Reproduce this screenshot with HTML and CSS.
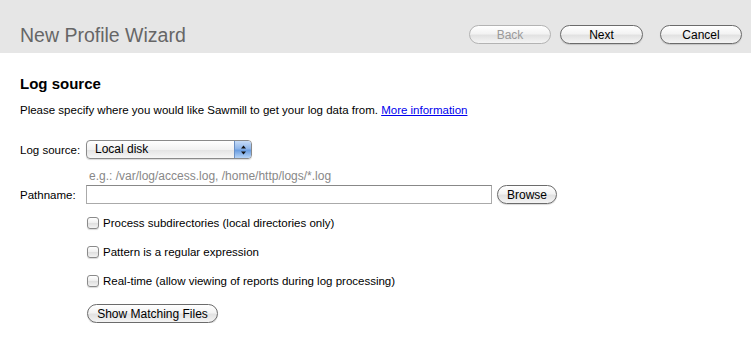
FILE: index.html
```html
<!DOCTYPE html>
<html lang="en">

<head>
    <meta charset="UTF-8">
    <title>New Profile Wizard</title>
    <link rel="stylesheet" href="styles.css">
</head>

<body>
    <div class="header">
        <h1 class="title">New Profile Wizard</h1>
        <div class="nav">
            <button class="aqua wide" disabled>Back</button>
            <button class="aqua wide next">Next</button>
            <button class="aqua wide">Cancel</button>
        </div>
    </div>

    <div class="content">
        <h2>Log source</h2>
        <p class="description">Please specify where you would like Sawmill to get your log data from. <a href="#">More information</a></p>

        <div class="row source-row">
            <label class="label">Log source:</label>
            <div class="select">
                <span class="select-value">Local disk</span>
                <span class="select-arrow">
                    <svg width="7" height="10" viewBox="0 0 7 10">
                        <path d="M3.5 0.5 L6 3.5 L1 3.5 Z" fill="#111"/>
                        <path d="M3.5 9.5 L6 6.5 L1 6.5 Z" fill="#111"/>
                    </svg>
                </span>
            </div>
        </div>

        <div class="hint">e.g.: /var/log/access.log, /home/http/logs/*.log</div>

        <div class="row path-row">
            <label class="label" for="pathname">Pathname:</label>
            <input type="text" id="pathname" class="text-input">
            <button class="aqua small browse">Browse</button>
        </div>

        <div class="options">
            <label class="check"><input type="checkbox"> Process subdirectories (local directories only)</label>
            <label class="check"><input type="checkbox"> Pattern is a regular expression</label>
            <label class="check"><input type="checkbox"> Real-time (allow viewing of reports during log processing)</label>
        </div>

        <button class="aqua small match">Show Matching Files</button>
    </div>
</body>

</html>
```

FILE: styles.css
```css
* {
    margin: 0;
    padding: 0;
    box-sizing: border-box;
}

body {
    font-family: 'Liberation Sans', Arial, sans-serif;
    font-size: 11.5px;
    color: #000;
    background: #fff;
}

.header {
    height: 53px;
    background: #e6e6e6;
    display: flex;
    justify-content: space-between;
    align-items: flex-end;
    padding: 0 9px 9px 20px;
}

.title {
    font-size: 19.5px;
    font-weight: normal;
    color: #666;
    line-height: 20px;
    margin-bottom: -1px;
}

.nav {
    display: flex;
    gap: 9px;
}

.aqua {
    font-family: 'Liberation Sans', Arial, sans-serif;
    font-size: 12px;
    color: #000;
    height: 19px;
    border: 1px solid #6b6b6b;
    border-radius: 10px;
    background: linear-gradient(to bottom, #ffffff 0%, #f3f3f3 45%, #e2e2e2 55%, #f4f4f4 100%);
    box-shadow: 0 1px 1px rgba(0, 0, 0, 0.15);
    cursor: pointer;
}

.aqua:disabled {
    color: #9a9a9a;
    border-color: #b3b3b3;
    cursor: default;
    box-shadow: none;
}

.wide {
    width: 82px;
}

.next {
    width: 83px;
    margin-right: 8px;
}

.small {
    padding: 0 8px;
}

.browse {
    width: 60px;
}

.content {
    padding: 22px 20px 0 20px;
}

h2 {
    font-size: 15px;
    font-weight: bold;
    line-height: 18px;
}

.description {
    margin-top: 10px;
    line-height: 14px;
}

.description a {
    color: #0000ee;
}

.row {
    display: flex;
    align-items: center;
}

.label {
    width: 66px;
}

.source-row {
    margin-top: 23px;
}

.select {
    width: 166px;
    height: 19px;
    display: flex;
    border: 1px solid #8a8a8a;
    border-radius: 4px;
    overflow: hidden;
    background: linear-gradient(to bottom, #ffffff 0%, #f2f2f2 50%, #e4e4e4 55%, #f6f6f6 100%);
    box-shadow: 0 1px 1px rgba(0, 0, 0, 0.15);
}

.select-value {
    flex: 1;
    padding-left: 8px;
    font-size: 12px;
    line-height: 17px;
}

.select-arrow {
    width: 17px;
    display: flex;
    align-items: center;
    justify-content: center;
    border-left: 1px solid #6a8fc4;
    background: linear-gradient(to bottom, #c7dcf7 0%, #8fb6ea 45%, #6a9de0 55%, #b6d4f7 100%);
}

.hint {
    color: #888;
    font-size: 12px;
    margin: 10px 0 0 69px;
    line-height: 14px;
}

.path-row {
    margin-top: 2px;
}

.text-input {
    width: 406px;
    height: 19px;
    border: 1px solid #aaa;
    border-top-color: #888;
    margin-right: 5px;
    font-size: 11px;
}

.options {
    display: flex;
    flex-direction: column;
    gap: 15px;
    margin: 12px 0 0 67px;
}

.check {
    display: flex;
    align-items: center;
    gap: 4px;
    line-height: 14px;
}

.check input {
    appearance: none;
    width: 12px;
    height: 12px;
    border: 1px solid #8a8a8a;
    border-radius: 3px;
    background: linear-gradient(to bottom, #ffffff 0%, #eeeeee 50%, #e0e0e0 55%, #f2f2f2 100%);
    box-shadow: 0 1px 1px rgba(0, 0, 0, 0.15);
}

.match {
    width: 131px;
    margin: 16px 0 0 67px;
}
```
